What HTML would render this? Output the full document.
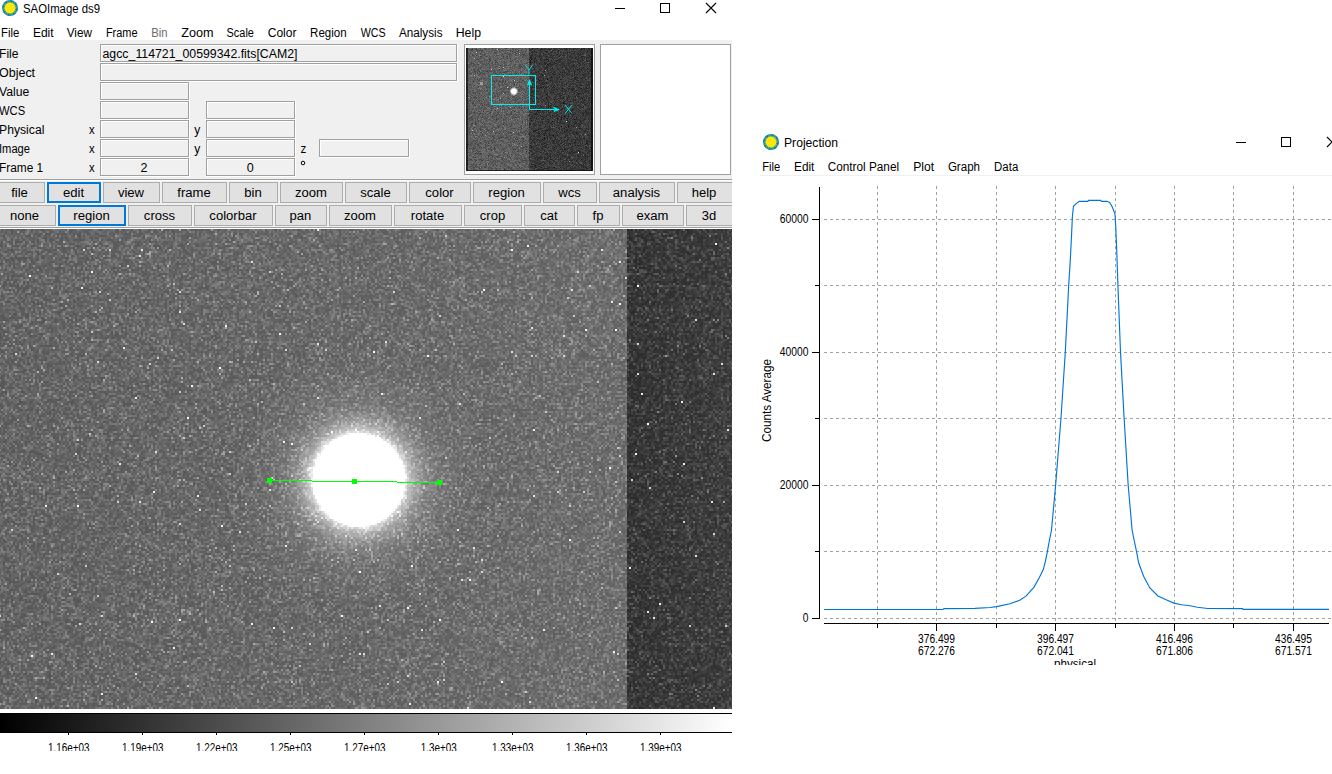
<!DOCTYPE html><html><head><meta charset="utf-8"><title>SAOImage ds9</title><style>html,body{margin:0;padding:0;background:#fff;overflow:hidden;width:1332px;height:774px;position:relative}text{font-family:"Liberation Sans",sans-serif;}</style></head><body><svg width="1332" height="774" viewBox="0 0 1332 774" font-family="Liberation Sans, sans-serif" style="position:absolute;left:0;top:0"><rect x="0" y="0" width="1332" height="774" fill="#fff"/><g><circle cx="10" cy="8" r="8" fill="#22979c"/><circle cx="16.28" cy="9.25" r="1.5" fill="#1677b8"/><circle cx="13.56" cy="13.32" r="1.5" fill="#1677b8"/><circle cx="8.75" cy="14.28" r="1.5" fill="#1677b8"/><circle cx="4.68" cy="11.56" r="1.5" fill="#1677b8"/><circle cx="3.72" cy="6.75" r="1.5" fill="#1677b8"/><circle cx="6.44" cy="2.68" r="1.5" fill="#1677b8"/><circle cx="11.25" cy="1.72" r="1.5" fill="#1677b8"/><circle cx="15.32" cy="4.44" r="1.5" fill="#1677b8"/><polygon points="17.30,8.00 14.51,8.90 16.74,10.79 13.82,10.56 15.16,13.16 12.56,11.82 12.79,14.74 10.90,12.51 10.00,15.30 9.10,12.51 7.21,14.74 7.44,11.82 4.84,13.16 6.18,10.56 3.26,10.79 5.49,8.90 2.70,8.00 5.49,7.10 3.26,5.21 6.18,5.44 4.84,2.84 7.44,4.18 7.21,1.26 9.10,3.49 10.00,0.70 10.90,3.49 12.79,1.26 12.56,4.18 15.16,2.84 13.82,5.44 16.74,5.21 14.51,7.10" fill="#9ccc3a"/><circle cx="10" cy="8" r="5.4" fill="#fde60a"/></g><text x="23" y="13" font-size="12" fill="#000" textLength="77" lengthAdjust="spacingAndGlyphs">SAOImage ds9</text><rect x="615" y="8" width="10" height="1" fill="#000"/><rect x="660.5" y="3.5" width="9" height="9" fill="none" stroke="#000" stroke-width="1"/><path d="M706 3L716 13M716 3L706 13" stroke="#000" stroke-width="1.1" fill="none" shape-rendering="geometricPrecision"/><text x="1.0" y="37" font-size="12" fill="#000" textLength="18.3" lengthAdjust="spacingAndGlyphs">File</text><text x="32.9" y="37" font-size="12" fill="#000" textLength="20.7" lengthAdjust="spacingAndGlyphs">Edit</text><text x="66.7" y="37" font-size="12" fill="#000" textLength="25.2" lengthAdjust="spacingAndGlyphs">View</text><text x="105.9" y="37" font-size="12" fill="#000" textLength="31.6" lengthAdjust="spacingAndGlyphs">Frame</text><text x="151.2" y="37" font-size="12" fill="#6d6d6d" textLength="16.3" lengthAdjust="spacingAndGlyphs">Bin</text><text x="181.2" y="37" font-size="12" fill="#000" textLength="32.3" lengthAdjust="spacingAndGlyphs">Zoom</text><text x="226.6" y="37" font-size="12" fill="#000" textLength="27.3" lengthAdjust="spacingAndGlyphs">Scale</text><text x="267.7" y="37" font-size="12" fill="#000" textLength="28.8" lengthAdjust="spacingAndGlyphs">Color</text><text x="310.1" y="37" font-size="12" fill="#000" textLength="36.5" lengthAdjust="spacingAndGlyphs">Region</text><text x="360.8" y="37" font-size="12" fill="#000" textLength="24.9" lengthAdjust="spacingAndGlyphs">WCS</text><text x="398.9" y="37" font-size="12" fill="#000" textLength="43.6" lengthAdjust="spacingAndGlyphs">Analysis</text><text x="455.7" y="37" font-size="12" fill="#000" textLength="25.3" lengthAdjust="spacingAndGlyphs">Help</text><rect x="0" y="40" width="732" height="189" fill="#f0f0f0"/><text x="-1" y="58" font-size="12" fill="#000" textLength="19.5" lengthAdjust="spacingAndGlyphs">File</text><text x="-1" y="77" font-size="12" fill="#000" textLength="36.1" lengthAdjust="spacingAndGlyphs">Object</text><text x="-1" y="96" font-size="12" fill="#000" textLength="30.3" lengthAdjust="spacingAndGlyphs">Value</text><text x="-1" y="115" font-size="12" fill="#000" textLength="26.2" lengthAdjust="spacingAndGlyphs">WCS</text><text x="-1" y="134" font-size="12" fill="#000" textLength="45.4" lengthAdjust="spacingAndGlyphs">Physical</text><text x="-1" y="153" font-size="12" fill="#000" textLength="31" lengthAdjust="spacingAndGlyphs">Image</text><text x="-1" y="172" font-size="12" fill="#000" textLength="44.2" lengthAdjust="spacingAndGlyphs">Frame 1</text><rect x="100" y="44" width="358" height="19" fill="#fff"/><rect x="100" y="44" width="357" height="18" fill="#a0a0a0"/><rect x="101" y="45" width="355" height="16" fill="#fff"/><rect x="102" y="46" width="354" height="15" fill="#f0f0f0"/><rect x="100" y="63" width="358" height="19" fill="#fff"/><rect x="100" y="63" width="357" height="18" fill="#a0a0a0"/><rect x="101" y="64" width="355" height="16" fill="#fff"/><rect x="102" y="65" width="354" height="15" fill="#f0f0f0"/><rect x="100" y="82" width="90" height="19" fill="#fff"/><rect x="100" y="82" width="89" height="18" fill="#a0a0a0"/><rect x="101" y="83" width="87" height="16" fill="#fff"/><rect x="102" y="84" width="86" height="15" fill="#f0f0f0"/><rect x="100" y="101" width="90" height="19" fill="#fff"/><rect x="100" y="101" width="89" height="18" fill="#a0a0a0"/><rect x="101" y="102" width="87" height="16" fill="#fff"/><rect x="102" y="103" width="86" height="15" fill="#f0f0f0"/><rect x="206" y="101" width="90" height="19" fill="#fff"/><rect x="206" y="101" width="89" height="18" fill="#a0a0a0"/><rect x="207" y="102" width="87" height="16" fill="#fff"/><rect x="208" y="103" width="86" height="15" fill="#f0f0f0"/><rect x="100" y="120" width="90" height="19" fill="#fff"/><rect x="100" y="120" width="89" height="18" fill="#a0a0a0"/><rect x="101" y="121" width="87" height="16" fill="#fff"/><rect x="102" y="122" width="86" height="15" fill="#f0f0f0"/><rect x="206" y="120" width="90" height="19" fill="#fff"/><rect x="206" y="120" width="89" height="18" fill="#a0a0a0"/><rect x="207" y="121" width="87" height="16" fill="#fff"/><rect x="208" y="122" width="86" height="15" fill="#f0f0f0"/><rect x="100" y="139" width="90" height="19" fill="#fff"/><rect x="100" y="139" width="89" height="18" fill="#a0a0a0"/><rect x="101" y="140" width="87" height="16" fill="#fff"/><rect x="102" y="141" width="86" height="15" fill="#f0f0f0"/><rect x="206" y="139" width="90" height="19" fill="#fff"/><rect x="206" y="139" width="89" height="18" fill="#a0a0a0"/><rect x="207" y="140" width="87" height="16" fill="#fff"/><rect x="208" y="141" width="86" height="15" fill="#f0f0f0"/><rect x="100" y="158" width="90" height="19" fill="#fff"/><rect x="100" y="158" width="89" height="18" fill="#a0a0a0"/><rect x="101" y="159" width="87" height="16" fill="#fff"/><rect x="102" y="160" width="86" height="15" fill="#f0f0f0"/><rect x="206" y="158" width="90" height="19" fill="#fff"/><rect x="206" y="158" width="89" height="18" fill="#a0a0a0"/><rect x="207" y="159" width="87" height="16" fill="#fff"/><rect x="208" y="160" width="86" height="15" fill="#f0f0f0"/><rect x="319" y="139" width="91" height="19" fill="#fff"/><rect x="319" y="139" width="90" height="18" fill="#a0a0a0"/><rect x="320" y="140" width="88" height="16" fill="#fff"/><rect x="321" y="141" width="87" height="15" fill="#f0f0f0"/><text x="89" y="134" font-size="12" fill="#000" textLength="5.6" lengthAdjust="spacingAndGlyphs">x</text><text x="89" y="153" font-size="12" fill="#000" textLength="5.6" lengthAdjust="spacingAndGlyphs">x</text><text x="89" y="172" font-size="12" fill="#000" textLength="5.6" lengthAdjust="spacingAndGlyphs">x</text><text x="194.3" y="134" font-size="12" fill="#000" textLength="6" lengthAdjust="spacingAndGlyphs">y</text><text x="194.3" y="153" font-size="12" fill="#000" textLength="6" lengthAdjust="spacingAndGlyphs">y</text><text x="300.5" y="153" font-size="12" fill="#000" textLength="5.8" lengthAdjust="spacingAndGlyphs">z</text><circle cx="303" cy="163" r="1.8" fill="none" stroke="#000" stroke-width="1"/><text x="102.5" y="58" font-size="12" fill="#000" textLength="195" lengthAdjust="spacingAndGlyphs">agcc_114721_00599342.fits[CAM2]</text><text x="144" y="172" font-size="12" fill="#000" text-anchor="middle" textLength="7" lengthAdjust="spacingAndGlyphs">2</text><text x="250.3" y="172" font-size="12" fill="#000" text-anchor="middle" textLength="7" lengthAdjust="spacingAndGlyphs">0</text><rect x="464" y="44" width="131" height="131" fill="#a0a0a0"/><rect x="465" y="45" width="129" height="129" fill="#fff"/><rect x="466" y="48" width="63" height="123" fill="#5e5e5e"/><rect x="529" y="48" width="64" height="123" fill="#3a3a3a"/><circle cx="513.4" cy="90.8" r="3" fill="#fff"/><rect x="600" y="44" width="131" height="131" fill="#a0a0a0"/><rect x="601" y="45" width="129" height="129" fill="#fff"/><rect x="0" y="179" width="732" height="1" fill="#a0a0a0"/><rect x="0" y="180" width="732" height="1" fill="#fff"/><rect x="-5" y="182" width="50" height="21" fill="#adadad"/><rect x="-4" y="183" width="48" height="19" fill="#e1e1e1"/><text x="19.5" y="197" font-size="12" fill="#000" text-anchor="middle" textLength="16.7" lengthAdjust="spacingAndGlyphs">file</text><rect x="47" y="182" width="54" height="21" fill="#0078d7"/><rect x="49" y="184" width="50" height="17" fill="#e1e1e1"/><text x="73.5" y="197" font-size="12" fill="#000" text-anchor="middle" textLength="21.1" lengthAdjust="spacingAndGlyphs">edit</text><rect x="103" y="182" width="57" height="21" fill="#adadad"/><rect x="104" y="183" width="55" height="19" fill="#e1e1e1"/><text x="131.0" y="197" font-size="12" fill="#000" text-anchor="middle" textLength="26.2" lengthAdjust="spacingAndGlyphs">view</text><rect x="162" y="182" width="65" height="21" fill="#adadad"/><rect x="163" y="183" width="63" height="19" fill="#e1e1e1"/><text x="194.0" y="197" font-size="12" fill="#000" text-anchor="middle" textLength="33.4" lengthAdjust="spacingAndGlyphs">frame</text><rect x="229" y="182" width="49" height="21" fill="#adadad"/><rect x="230" y="183" width="47" height="19" fill="#e1e1e1"/><text x="253.0" y="197" font-size="12" fill="#000" text-anchor="middle" textLength="17.5" lengthAdjust="spacingAndGlyphs">bin</text><rect x="280" y="182" width="63" height="21" fill="#adadad"/><rect x="281" y="183" width="61" height="19" fill="#e1e1e1"/><text x="311.0" y="197" font-size="12" fill="#000" text-anchor="middle" textLength="32.0" lengthAdjust="spacingAndGlyphs">zoom</text><rect x="345" y="182" width="62" height="21" fill="#adadad"/><rect x="346" y="183" width="60" height="19" fill="#e1e1e1"/><text x="375.5" y="197" font-size="12" fill="#000" text-anchor="middle" textLength="30.5" lengthAdjust="spacingAndGlyphs">scale</text><rect x="409" y="182" width="62" height="21" fill="#adadad"/><rect x="410" y="183" width="60" height="19" fill="#e1e1e1"/><text x="439.5" y="197" font-size="12" fill="#000" text-anchor="middle" textLength="28.4" lengthAdjust="spacingAndGlyphs">color</text><rect x="473" y="182" width="68" height="21" fill="#adadad"/><rect x="474" y="183" width="66" height="19" fill="#e1e1e1"/><text x="506.5" y="197" font-size="12" fill="#000" text-anchor="middle" textLength="36.4" lengthAdjust="spacingAndGlyphs">region</text><rect x="543" y="182" width="54" height="21" fill="#adadad"/><rect x="544" y="183" width="52" height="19" fill="#e1e1e1"/><text x="569.5" y="197" font-size="12" fill="#000" text-anchor="middle" textLength="22.5" lengthAdjust="spacingAndGlyphs">wcs</text><rect x="599" y="182" width="76" height="21" fill="#adadad"/><rect x="600" y="183" width="74" height="19" fill="#e1e1e1"/><text x="636.5" y="197" font-size="12" fill="#000" text-anchor="middle" textLength="47.3" lengthAdjust="spacingAndGlyphs">analysis</text><rect x="677" y="182" width="64" height="21" fill="#adadad"/><rect x="678" y="183" width="62" height="19" fill="#e1e1e1"/><text x="704" y="197" font-size="12" fill="#000" text-anchor="middle" textLength="24.7" lengthAdjust="spacingAndGlyphs">help</text><rect x="-6" y="205" width="62" height="21" fill="#adadad"/><rect x="-5" y="206" width="60" height="19" fill="#e1e1e1"/><text x="24.5" y="220" font-size="12" fill="#000" text-anchor="middle" textLength="29.1" lengthAdjust="spacingAndGlyphs">none</text><rect x="58" y="205" width="68" height="21" fill="#0078d7"/><rect x="60" y="207" width="64" height="17" fill="#e1e1e1"/><text x="91.5" y="220" font-size="12" fill="#000" text-anchor="middle" textLength="36.4" lengthAdjust="spacingAndGlyphs">region</text><rect x="128" y="205" width="64" height="21" fill="#adadad"/><rect x="129" y="206" width="62" height="19" fill="#e1e1e1"/><text x="159.5" y="220" font-size="12" fill="#000" text-anchor="middle" textLength="31.3" lengthAdjust="spacingAndGlyphs">cross</text><rect x="194" y="205" width="79" height="21" fill="#adadad"/><rect x="195" y="206" width="77" height="19" fill="#e1e1e1"/><text x="233.0" y="220" font-size="12" fill="#000" text-anchor="middle" textLength="47.3" lengthAdjust="spacingAndGlyphs">colorbar</text><rect x="275" y="205" width="52" height="21" fill="#adadad"/><rect x="276" y="206" width="50" height="19" fill="#e1e1e1"/><text x="300.5" y="220" font-size="12" fill="#000" text-anchor="middle" textLength="21.8" lengthAdjust="spacingAndGlyphs">pan</text><rect x="329" y="205" width="63" height="21" fill="#adadad"/><rect x="330" y="206" width="61" height="19" fill="#e1e1e1"/><text x="360.0" y="220" font-size="12" fill="#000" text-anchor="middle" textLength="32.0" lengthAdjust="spacingAndGlyphs">zoom</text><rect x="394" y="205" width="68" height="21" fill="#adadad"/><rect x="395" y="206" width="66" height="19" fill="#e1e1e1"/><text x="427.5" y="220" font-size="12" fill="#000" text-anchor="middle" textLength="33.4" lengthAdjust="spacingAndGlyphs">rotate</text><rect x="464" y="205" width="58" height="21" fill="#adadad"/><rect x="465" y="206" width="56" height="19" fill="#e1e1e1"/><text x="492.5" y="220" font-size="12" fill="#000" text-anchor="middle" textLength="25.4" lengthAdjust="spacingAndGlyphs">crop</text><rect x="524" y="205" width="51" height="21" fill="#adadad"/><rect x="525" y="206" width="49" height="19" fill="#e1e1e1"/><text x="549.0" y="220" font-size="12" fill="#000" text-anchor="middle" textLength="17.4" lengthAdjust="spacingAndGlyphs">cat</text><rect x="577" y="205" width="43" height="21" fill="#adadad"/><rect x="578" y="206" width="41" height="19" fill="#e1e1e1"/><text x="598.0" y="220" font-size="12" fill="#000" text-anchor="middle" textLength="10.9" lengthAdjust="spacingAndGlyphs">fp</text><rect x="622" y="205" width="62" height="21" fill="#adadad"/><rect x="623" y="206" width="60" height="19" fill="#e1e1e1"/><text x="652.5" y="220" font-size="12" fill="#000" text-anchor="middle" textLength="32.0" lengthAdjust="spacingAndGlyphs">exam</text><rect x="686" y="205" width="55" height="21" fill="#adadad"/><rect x="687" y="206" width="53" height="19" fill="#e1e1e1"/><text x="709" y="220" font-size="12" fill="#000" text-anchor="middle" textLength="14.5" lengthAdjust="spacingAndGlyphs">3d</text><rect x="732" y="40" width="600" height="190" fill="#fff"/><rect x="0" y="227" width="732" height="1" fill="#a0a0a0"/><rect x="0" y="228" width="732" height="1" fill="#fff"/><defs><radialGradient id="star" cx="358.5" cy="479.5" r="75" gradientUnits="userSpaceOnUse"><stop offset="0" stop-color="#fff"/><stop offset="0.62" stop-color="#fff"/><stop offset="0.72" stop-color="#d8d8d8" stop-opacity="0.9"/><stop offset="0.85" stop-color="#aaa" stop-opacity="0.5"/><stop offset="1" stop-color="#888" stop-opacity="0"/></radialGradient><linearGradient id="cbar" x1="0" x2="732" y1="0" y2="0" gradientUnits="userSpaceOnUse"><stop offset="0" stop-color="#000"/><stop offset="1" stop-color="#fff"/></linearGradient></defs><rect x="0" y="229" width="627" height="480" fill="#6c6c6c"/><rect x="627" y="229" width="105" height="480" fill="#3d3d3d"/><circle cx="358.5" cy="479.5" r="75" fill="url(#star)"/><rect x="0" y="709" width="732" height="4" fill="#fff"/><rect x="0" y="713" width="732" height="1" fill="#000"/><rect x="0" y="714" width="732" height="18" fill="url(#cbar)"/><rect x="0" y="732" width="732" height="1" fill="#000"/><rect x="68" y="733" width="1" height="2" fill="#000"/><text x="68.8" y="752" font-size="12" fill="#000" text-anchor="middle" textLength="41.5" lengthAdjust="spacingAndGlyphs">1.16e+03</text><rect x="142" y="733" width="1" height="2" fill="#000"/><text x="142.8" y="752" font-size="12" fill="#000" text-anchor="middle" textLength="41.5" lengthAdjust="spacingAndGlyphs">1.19e+03</text><rect x="216" y="733" width="1" height="2" fill="#000"/><text x="216.8" y="752" font-size="12" fill="#000" text-anchor="middle" textLength="41.5" lengthAdjust="spacingAndGlyphs">1.22e+03</text><rect x="290" y="733" width="1" height="2" fill="#000"/><text x="290.8" y="752" font-size="12" fill="#000" text-anchor="middle" textLength="41.5" lengthAdjust="spacingAndGlyphs">1.25e+03</text><rect x="364" y="733" width="1" height="2" fill="#000"/><text x="364.8" y="752" font-size="12" fill="#000" text-anchor="middle" textLength="41.5" lengthAdjust="spacingAndGlyphs">1.27e+03</text><rect x="438" y="733" width="1" height="2" fill="#000"/><text x="438.8" y="752" font-size="12" fill="#000" text-anchor="middle" textLength="36" lengthAdjust="spacingAndGlyphs">1.3e+03</text><rect x="512" y="733" width="1" height="2" fill="#000"/><text x="512.8" y="752" font-size="12" fill="#000" text-anchor="middle" textLength="41.5" lengthAdjust="spacingAndGlyphs">1.33e+03</text><rect x="586" y="733" width="1" height="2" fill="#000"/><text x="586.8" y="752" font-size="12" fill="#000" text-anchor="middle" textLength="41.5" lengthAdjust="spacingAndGlyphs">1.36e+03</text><rect x="660" y="733" width="1" height="2" fill="#000"/><text x="660.8" y="752" font-size="12" fill="#000" text-anchor="middle" textLength="41.5" lengthAdjust="spacingAndGlyphs">1.39e+03</text><rect x="0" y="751" width="732" height="23" fill="#fff"/><g><circle cx="771" cy="142" r="8" fill="#22979c"/><circle cx="777.28" cy="143.25" r="1.5" fill="#1677b8"/><circle cx="774.56" cy="147.32" r="1.5" fill="#1677b8"/><circle cx="769.75" cy="148.28" r="1.5" fill="#1677b8"/><circle cx="765.68" cy="145.56" r="1.5" fill="#1677b8"/><circle cx="764.72" cy="140.75" r="1.5" fill="#1677b8"/><circle cx="767.44" cy="136.68" r="1.5" fill="#1677b8"/><circle cx="772.25" cy="135.72" r="1.5" fill="#1677b8"/><circle cx="776.32" cy="138.44" r="1.5" fill="#1677b8"/><polygon points="778.30,142.00 775.51,142.90 777.74,144.79 774.82,144.56 776.16,147.16 773.56,145.82 773.79,148.74 771.90,146.51 771.00,149.30 770.10,146.51 768.21,148.74 768.44,145.82 765.84,147.16 767.18,144.56 764.26,144.79 766.49,142.90 763.70,142.00 766.49,141.10 764.26,139.21 767.18,139.44 765.84,136.84 768.44,138.18 768.21,135.26 770.10,137.49 771.00,134.70 771.90,137.49 773.79,135.26 773.56,138.18 776.16,136.84 774.82,139.44 777.74,139.21 775.51,141.10" fill="#9ccc3a"/><circle cx="771" cy="142" r="5.4" fill="#fde60a"/></g><text x="784" y="147" font-size="12" fill="#000" textLength="54" lengthAdjust="spacingAndGlyphs">Projection</text><rect x="1236" y="142" width="10" height="1" fill="#000"/><rect x="1281.5" y="137.5" width="9" height="9" fill="none" stroke="#000" stroke-width="1"/><path d="M1327 137L1337 147M1337 137L1327 147" stroke="#000" stroke-width="1.1" fill="none" shape-rendering="geometricPrecision"/><text x="762.3" y="171" font-size="12" fill="#000" textLength="18.0" lengthAdjust="spacingAndGlyphs">File</text><text x="794.0" y="171" font-size="12" fill="#000" textLength="20.4" lengthAdjust="spacingAndGlyphs">Edit</text><text x="827.7" y="171" font-size="12" fill="#000" textLength="71.4" lengthAdjust="spacingAndGlyphs">Control Panel</text><text x="913.2" y="171" font-size="12" fill="#000" textLength="21.0" lengthAdjust="spacingAndGlyphs">Plot</text><text x="947.9" y="171" font-size="12" fill="#000" textLength="32.1" lengthAdjust="spacingAndGlyphs">Graph</text><text x="994.1" y="171" font-size="12" fill="#000" textLength="24.2" lengthAdjust="spacingAndGlyphs">Data</text><rect x="760" y="175" width="572" height="1" fill="#f0f0f0"/><line x1="877.5" y1="186" x2="877.5" y2="623" stroke="#a0a0a0" stroke-width="1" stroke-dasharray="3 3"/><line x1="936.5" y1="186" x2="936.5" y2="623" stroke="#a0a0a0" stroke-width="1" stroke-dasharray="3 3"/><line x1="996.5" y1="186" x2="996.5" y2="623" stroke="#a0a0a0" stroke-width="1" stroke-dasharray="3 3"/><line x1="1055.5" y1="186" x2="1055.5" y2="623" stroke="#a0a0a0" stroke-width="1" stroke-dasharray="3 3"/><line x1="1115.5" y1="186" x2="1115.5" y2="623" stroke="#a0a0a0" stroke-width="1" stroke-dasharray="3 3"/><line x1="1174.5" y1="186" x2="1174.5" y2="623" stroke="#a0a0a0" stroke-width="1" stroke-dasharray="3 3"/><line x1="1233.5" y1="186" x2="1233.5" y2="623" stroke="#a0a0a0" stroke-width="1" stroke-dasharray="3 3"/><line x1="1293.5" y1="186" x2="1293.5" y2="623" stroke="#a0a0a0" stroke-width="1" stroke-dasharray="3 3"/><line x1="824" y1="219.5" x2="1332" y2="219.5" stroke="#a0a0a0" stroke-width="1" stroke-dasharray="3 3"/><line x1="824" y1="285.5" x2="1332" y2="285.5" stroke="#a0a0a0" stroke-width="1" stroke-dasharray="3 3"/><line x1="824" y1="352.5" x2="1332" y2="352.5" stroke="#a0a0a0" stroke-width="1" stroke-dasharray="3 3"/><line x1="824" y1="418.5" x2="1332" y2="418.5" stroke="#a0a0a0" stroke-width="1" stroke-dasharray="3 3"/><line x1="824" y1="485.5" x2="1332" y2="485.5" stroke="#a0a0a0" stroke-width="1" stroke-dasharray="3 3"/><line x1="824" y1="551.5" x2="1332" y2="551.5" stroke="#a0a0a0" stroke-width="1" stroke-dasharray="3 3"/><line x1="824" y1="618.5" x2="1332" y2="618.5" stroke="#a0a0a0" stroke-width="1" stroke-dasharray="3 3"/><rect x="819" y="187" width="1" height="432" fill="#000"/><rect x="824" y="623" width="505" height="1" fill="#000"/><rect x="812" y="219" width="7" height="1" fill="#000"/><rect x="815" y="285" width="4" height="1" fill="#000"/><rect x="812" y="352" width="7" height="1" fill="#000"/><rect x="815" y="418" width="4" height="1" fill="#000"/><rect x="812" y="485" width="7" height="1" fill="#000"/><rect x="815" y="551" width="4" height="1" fill="#000"/><rect x="812" y="618" width="7" height="1" fill="#000"/><text x="808.5" y="222.5" font-size="12" fill="#000" text-anchor="end" textLength="28.7" lengthAdjust="spacingAndGlyphs">60000</text><text x="808.5" y="355.5" font-size="12" fill="#000" text-anchor="end" textLength="28.7" lengthAdjust="spacingAndGlyphs">40000</text><text x="808.5" y="488.5" font-size="12" fill="#000" text-anchor="end" textLength="28.7" lengthAdjust="spacingAndGlyphs">20000</text><text x="808.5" y="621.5" font-size="12" fill="#000" text-anchor="end" textLength="5.7" lengthAdjust="spacingAndGlyphs">0</text><rect x="877" y="624" width="1" height="4" fill="#000"/><rect x="936" y="624" width="1" height="7" fill="#000"/><rect x="996" y="624" width="1" height="4" fill="#000"/><rect x="1055" y="624" width="1" height="7" fill="#000"/><rect x="1115" y="624" width="1" height="4" fill="#000"/><rect x="1174" y="624" width="1" height="7" fill="#000"/><rect x="1233" y="624" width="1" height="4" fill="#000"/><rect x="1293" y="624" width="1" height="7" fill="#000"/><text x="936.5" y="643" font-size="12" fill="#000" text-anchor="middle" textLength="37" lengthAdjust="spacingAndGlyphs">376.499</text><text x="936.5" y="655" font-size="12" fill="#000" text-anchor="middle" textLength="37" lengthAdjust="spacingAndGlyphs">672.276</text><text x="1055.5" y="643" font-size="12" fill="#000" text-anchor="middle" textLength="37" lengthAdjust="spacingAndGlyphs">396.497</text><text x="1055.5" y="655" font-size="12" fill="#000" text-anchor="middle" textLength="37" lengthAdjust="spacingAndGlyphs">672.041</text><text x="1174.5" y="643" font-size="12" fill="#000" text-anchor="middle" textLength="37" lengthAdjust="spacingAndGlyphs">416.496</text><text x="1174.5" y="655" font-size="12" fill="#000" text-anchor="middle" textLength="37" lengthAdjust="spacingAndGlyphs">671.806</text><text x="1293.5" y="643" font-size="12" fill="#000" text-anchor="middle" textLength="37" lengthAdjust="spacingAndGlyphs">436.495</text><text x="1293.5" y="655" font-size="12" fill="#000" text-anchor="middle" textLength="37" lengthAdjust="spacingAndGlyphs">671.571</text><text x="1075" y="668" font-size="12" fill="#000" text-anchor="middle" textLength="42" lengthAdjust="spacingAndGlyphs">physical</text><rect x="760" y="665" width="572" height="109" fill="#fff"/><text x="0" y="0" font-size="12" textLength="83" lengthAdjust="spacingAndGlyphs" text-anchor="middle" transform="translate(770.5 400.5) rotate(-90)">Counts Average</text><path d="M824 609.5 L943 609.5 L944 608.6 L975 608.4 L990 607.5 L996.6 606.6 L1009.8 603.8 L1019.7 600.3 L1026.3 595.9 L1034 587.1 L1039.5 577.3 L1043.3 569.6 L1045.5 560.8 L1047.4 551.4 L1049.3 541 L1051.5 530 L1055.6 485.5 L1061 418 L1065.3 352 L1068.7 285.2 L1070.3 260 L1071.6 234.3 L1072.4 216.2 L1073.5 206.3 L1076.2 203.6 L1079.3 201.3 L1087.9 201.3 L1088.4 200.4 L1100.6 200.4 L1101.5 201.3 L1106.9 201.3 L1109.6 202.4 L1112.3 207 L1115 214 L1115.8 228 L1116.9 255 L1117.9 285 L1120.5 352 L1124.1 418 L1128.2 485.5 L1132.1 530 L1134.3 541 L1136.5 551.4 L1138.7 563 L1143.6 576.2 L1149.7 587.7 L1157.9 595.9 L1166.2 599.8 L1173.8 603.1 L1181.5 604.7 L1190 605.8 L1197.4 607.3 L1207.8 608.5 L1242.6 608.6 L1243 609.4 L1329 609.4" stroke="#0074d9" stroke-width="1.15" fill="none"/></svg><div style="position:absolute;left:0;top:229px;width:732px;height:480px;overflow:hidden"><canvas id="cimg" width="367" height="240" style="position:absolute;left:-1px;top:0;width:734px;height:480px;image-rendering:pixelated"></canvas></div><canvas id="cpan" width="127" height="123" style="position:absolute;left:466px;top:48px;width:127px;height:123px"></canvas><svg width="1332" height="774" viewBox="0 0 1332 774" style="position:absolute;left:0;top:0"><rect x="269" y="480" width="43" height="1" fill="#00ff00"/><rect x="312" y="481" width="85" height="1" fill="#00ff00"/><rect x="397" y="482" width="42" height="1" fill="#00ff00"/><rect x="267" y="478" width="5" height="5" fill="#00ff00"/><rect x="352" y="479" width="5" height="5" fill="#00ff00"/><rect x="437" y="480" width="5" height="5" fill="#00ff00"/><rect x="491.5" y="75.5" width="44" height="29" fill="none" stroke="#00f0f0" stroke-width="1"/><path d="M529.5 109.5V84M529.5 109.5H554" stroke="#00f0f0" stroke-width="1" fill="none"/><path d="M529.5 79L532.3 85.5L529.5 84.5L526.7 85.5Z" fill="#00f0f0"/><path d="M560 109.5L553.5 106.7L554.5 109.5L553.5 112.3Z" fill="#00f0f0"/><path d="M525.5 65L529 70M532.5 65L529 70V74" stroke="#00f0f0" stroke-width="0.9" fill="none"/><path d="M565 105L572 113.5M572 105L565 113.5" stroke="#00f0f0" stroke-width="1" fill="none"/></svg><script>var LB=103,LG=10,DB=57,DG=8,LS=16,DS=14,SP=0.0016,PL=94,PD=58,PLS=15,PDS=14;
(function(){
var s=20240601;
function rnd(){s|=0;s=s+0x6D2B79F5|0;var t=Math.imul(s^s>>>15,1|s);t=t+Math.imul(t^t>>>7,61|t)^t;return((t^t>>>14)>>>0)/4294967296;}
function g(){var u=rnd()||1e-9,v=rnd();return Math.sqrt(-2*Math.log(u))*Math.cos(6.283185*v);}
function halo(r){
 var P=[[0,1],[46.5,1],[48,0.8],[50,0.66],[54,0.5],[60,0.34],[68,0.2],[80,0.1],[100,0.04],[130,0]];
 if(r>=130)return 0;
 for(var i=1;i<P.length;i++){if(r<P[i][0]){var a=P[i-1],b=P[i];return a[1]+(b[1]-a[1])*(r-a[0])/(b[0]-a[0]);}}
 return 0;}
function cl(v){return v<0?0:v>255?255:v;}
var c=document.getElementById('cimg'); if(c&&c.getContext){
 var ctx=c.getContext('2d'),W=367,H=240,id=ctx.createImageData(W,H),d=id.data;
 for(var y=0;y<H;y++)for(var x=0;x<W;x++){
  var px=x*2,py=y*2+1+229,left=px<627;
  var b0=(left?(LB+px/627*LG):(DB+(px-627)/105*DG)),gg=g(),nz=(gg*0.9+0.22*(gg*gg-1))*(left?LS:DS);
  var dx=px-358.8,dy=py-480,r=Math.sqrt(dx*dx+dy*dy),a=halo(r);
  var v=b0+a*(255-b0)+(a>=1?0:nz);
  if(rnd()<SP){var sv=200+rnd()*55; if(sv>v)v=sv;}
  var k=(y*W+x)*4; v=cl(v); d[k]=d[k+1]=d[k+2]=v; d[k+3]=255;}
 ctx.putImageData(id,0,0);}
var p=document.getElementById('cpan'); if(p&&p.getContext){
 var ctx2=p.getContext('2d'),W2=127,H2=123,id2=ctx2.createImageData(W2,H2),e=id2.data;
 for(var y=0;y<H2;y++)for(var x=0;x<W2;x++){
  var X=466+x,Y=48+y,left=X<529;
  var v=(left?PL:PD)+g()*(left?PLS:PDS);
  if(x<2||x>=W2-2||y>=H2-1) v=v*0.35;
  var dx=X-513.4,dy=Y-90.8,r=Math.sqrt(dx*dx+dy*dy);
  if(r<2.6)v=255;else if(r<4.5)v=v+(255-v)*(4.5-r)/2.2;
  if(rnd()<0.0025) v=140+rnd()*90;
  var ex=X-481,ey=Y-83; if(ex*ex+ey*ey<3) v=v+(200-v)*0.6;
  var k=(y*W2+x)*4; v=cl(v); e[k]=e[k+1]=e[k+2]=v; e[k+3]=255;}
 ctx2.putImageData(id2,0,0);}
})();
</script></body></html>
